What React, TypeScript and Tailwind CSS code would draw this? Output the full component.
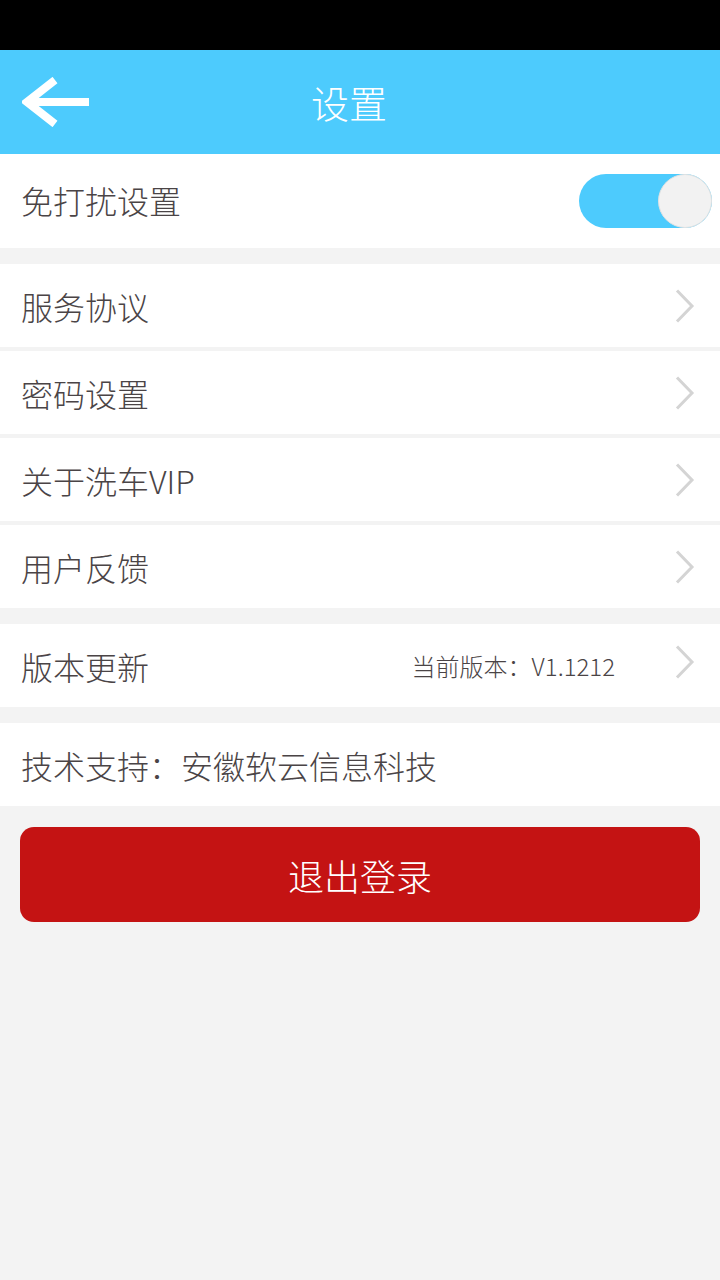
import React from 'react'

const font = { fontFamily: '"Noto Sans CJK SC", "Noto Sans", sans-serif' }

function Chevron({ className = '' }: { className?: string }) {
    return (
        <svg className={className} width="20" height="34" viewBox="0 0 20 34" fill="none">
            <path d="M2 1.5 L17 17 L2 32.5" stroke="#d4d4d4" strokeWidth="3" />
        </svg>
    )
}

function Row({ label, right }: { label: string; right?: React.ReactNode }) {
    return (
        <div className="h-[83px] bg-white flex flex-row items-center justify-between pl-[21px] pr-[25px]">
            <span className="text-[32px] text-[#4a4446] leading-none font-light">{label}</span>
            {right ?? <Chevron />}
        </div>
    )
}

export default function App() {
    return (
        <div className="w-[720px] min-h-[1280px] bg-[#f3f3f3] flex flex-col" style={font}>
            <div className="h-[50px] bg-black" />
            <div className="h-[104px] bg-[#4dcbfd] flex flex-row items-center relative">
                <svg className="ml-[22px]" width="68" height="50" viewBox="0 0 68 50" fill="none">
                    <path d="M33 3 L5 25 L33 47" stroke="white" strokeWidth="8" />
                    <path d="M6 25 H67" stroke="white" strokeWidth="8" />
                </svg>
                <span className="absolute left-[311px] text-[38px] text-white leading-none font-light">设置</span>
            </div>

            <div className="h-[94px] bg-white flex flex-row items-center justify-between pl-[21px] pr-[8px]">
                <span className="text-[32px] text-[#4a4446] leading-none font-light -mt-[2px]">免打扰设置</span>
                <div className="w-[133px] h-[54px] rounded-full bg-[#4dcbfd] flex flex-row justify-end">
                    <div className="w-[54px] h-[54px] rounded-full bg-[#f2f2f2] border border-[#e2e2e2]" />
                </div>
            </div>

            <div className="mt-[16px] flex flex-col gap-[4px]">
                <Row label="服务协议" />
                <Row label="密码设置" />
                <Row label="关于洗车VIP" />
                <Row label="用户反馈" />
            </div>

            <div className="mt-[16px] h-[83px] bg-white flex flex-row items-center justify-between pl-[21px] pr-[25px]">
                <span className="text-[32px] text-[#4a4446] leading-none font-light">版本更新</span>
                <div className="flex flex-row items-center">
                    <span className="text-[24px] text-[#4a4446] leading-none font-light mr-[60px]">当前版本：V1.1212</span>
                    <Chevron className="-mt-[8px]" />
                </div>
            </div>

            <div className="mt-[16px] h-[83px] bg-white flex flex-row items-center pl-[21px]">
                <span className="text-[32px] text-[#4a4446] leading-none font-light">技术支持：安徽软云信息科技</span>
            </div>

            <div className="mx-[20px] mt-[21px] h-[95px] rounded-[14px] bg-[#c41313] flex items-center justify-center">
                <span className="text-[36px] text-white leading-none font-light">退出登录</span>
            </div>
        </div>
    )
}
